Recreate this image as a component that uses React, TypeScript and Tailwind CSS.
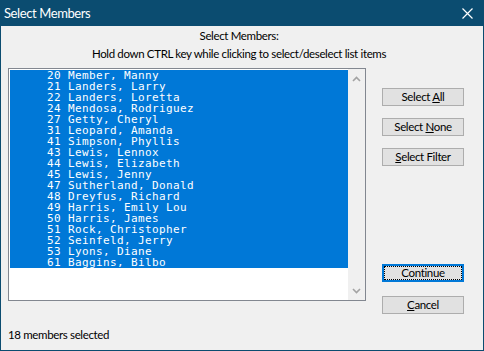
import type { ReactNode } from 'react'

const members: [number, string][] = [
  [20, 'Member, Manny'],
  [21, 'Landers, Larry'],
  [22, 'Landers, Loretta'],
  [24, 'Mendosa, Rodriguez'],
  [27, 'Getty, Cheryl'],
  [31, 'Leopard, Amanda'],
  [41, 'Simpson, Phyllis'],
  [43, 'Lewis, Lennox'],
  [44, 'Lewis, Elizabeth'],
  [45, 'Lewis, Jenny'],
  [47, 'Sutherland, Donald'],
  [48, 'Dreyfus, Richard'],
  [49, 'Harris, Emily Lou'],
  [50, 'Harris, James'],
  [51, 'Rock, Christopher'],
  [52, 'Seinfeld, Jerry'],
  [53, 'Lyons, Diane'],
  [61, 'Baggins, Bilbo'],
]

const ui = { fontFamily: 'Lato, "Noto Sans", sans-serif' }
const mono = { fontFamily: '"DejaVu Sans Mono", "Liberation Mono", monospace' }

function Btn({ children, focused }: { children: ReactNode; focused?: boolean }) {
  return (
    <button
      className={
        'relative flex h-[18px] w-[82px] items-center justify-center bg-[#e1e1e1] text-[11.5px] leading-none tracking-[-0.35px] text-black ' +
        (focused ? 'border-2 border-[#0078d7]' : 'border border-[#adadad]')
      }
      style={ui}
    >
      {focused ? <span className="absolute inset-0 border border-dotted border-black" /> : null}
      <span className="relative">{children}</span>
    </button>
  )
}

function Chevron({ up }: { up?: boolean }) {
  return (
    <svg width="9" height="6" viewBox="0 0 9 6" className="block">
      <path
        d={up ? 'M1 5 L4.5 1.5 L8 5' : 'M1 1 L4.5 4.5 L8 1'}
        fill="none"
        stroke="#a3a3a3"
        strokeWidth="1.6"
      />
    </svg>
  )
}

export default function App() {
  return (
    <div className="h-[351px] w-[484px] overflow-hidden border border-[#0b4c70] bg-[#0b4c70]">
      <div className="flex h-[25px] items-center justify-between pl-[3px] pr-[10px]">
        <div className="text-[13px] tracking-[-0.4px] text-white" style={ui}>
          Select Members
        </div>
        <svg width="11" height="11" viewBox="0 0 11 11">
          <path d="M0.5 0.5 L10.5 10.5 M10.5 0.5 L0.5 10.5" stroke="#fff" strokeWidth="1.2" />
        </svg>
      </div>

      <div className="h-[324px] bg-[#f0f0f0] text-[11.5px] tracking-[-0.35px] text-black" style={ui}>
        <div className="pr-[6px] pt-[1px] text-center">
          <div className="h-[18px] leading-[18px]">Select Members:</div>
          <div className="h-[18px] leading-[18px]">Hold down CTRL key while clicking to select/deselect list items</div>
        </div>

        <div className="mt-[5px] flex h-[233px] items-start tracking-normal">
          <div className="ml-[7px] flex h-[233px] w-[358px] border border-[#828790] bg-white">
            <div className="flex-1 pl-[1px] pt-[1px]">
              {members.map(([id, name]) => (
                <div
                  key={id}
                  className="h-[11px] whitespace-pre bg-[#0078d7] pl-[37px] text-[11px] leading-[11px] tracking-[0.38px] text-white"
                  style={mono}
                >
                  {id} {name}
                </div>
              ))}
            </div>
            <div className="flex w-[17px] flex-col items-center justify-between bg-[#f0f0f0] pb-[6px] pt-[7px]">
              <Chevron up />
              <Chevron />
            </div>
          </div>

          <div className="ml-[16px] flex flex-col">
            <div className="mt-[20px] flex flex-col gap-[12px]">
              <Btn>
                Select <u>A</u>ll
              </Btn>
              <Btn>
                Select <u>N</u>one
              </Btn>
              <Btn>
                <u>S</u>elect Filter
              </Btn>
            </div>
            <div className="mt-[98px] flex flex-col gap-[14px]">
              <Btn focused>Continue</Btn>
              <Btn>
                <u>C</u>ancel
              </Btn>
            </div>
          </div>
        </div>

        <div className="ml-[7px] mt-[25px] h-[18px] leading-[18px]">18 members selected</div>
      </div>
    </div>
  )
}
